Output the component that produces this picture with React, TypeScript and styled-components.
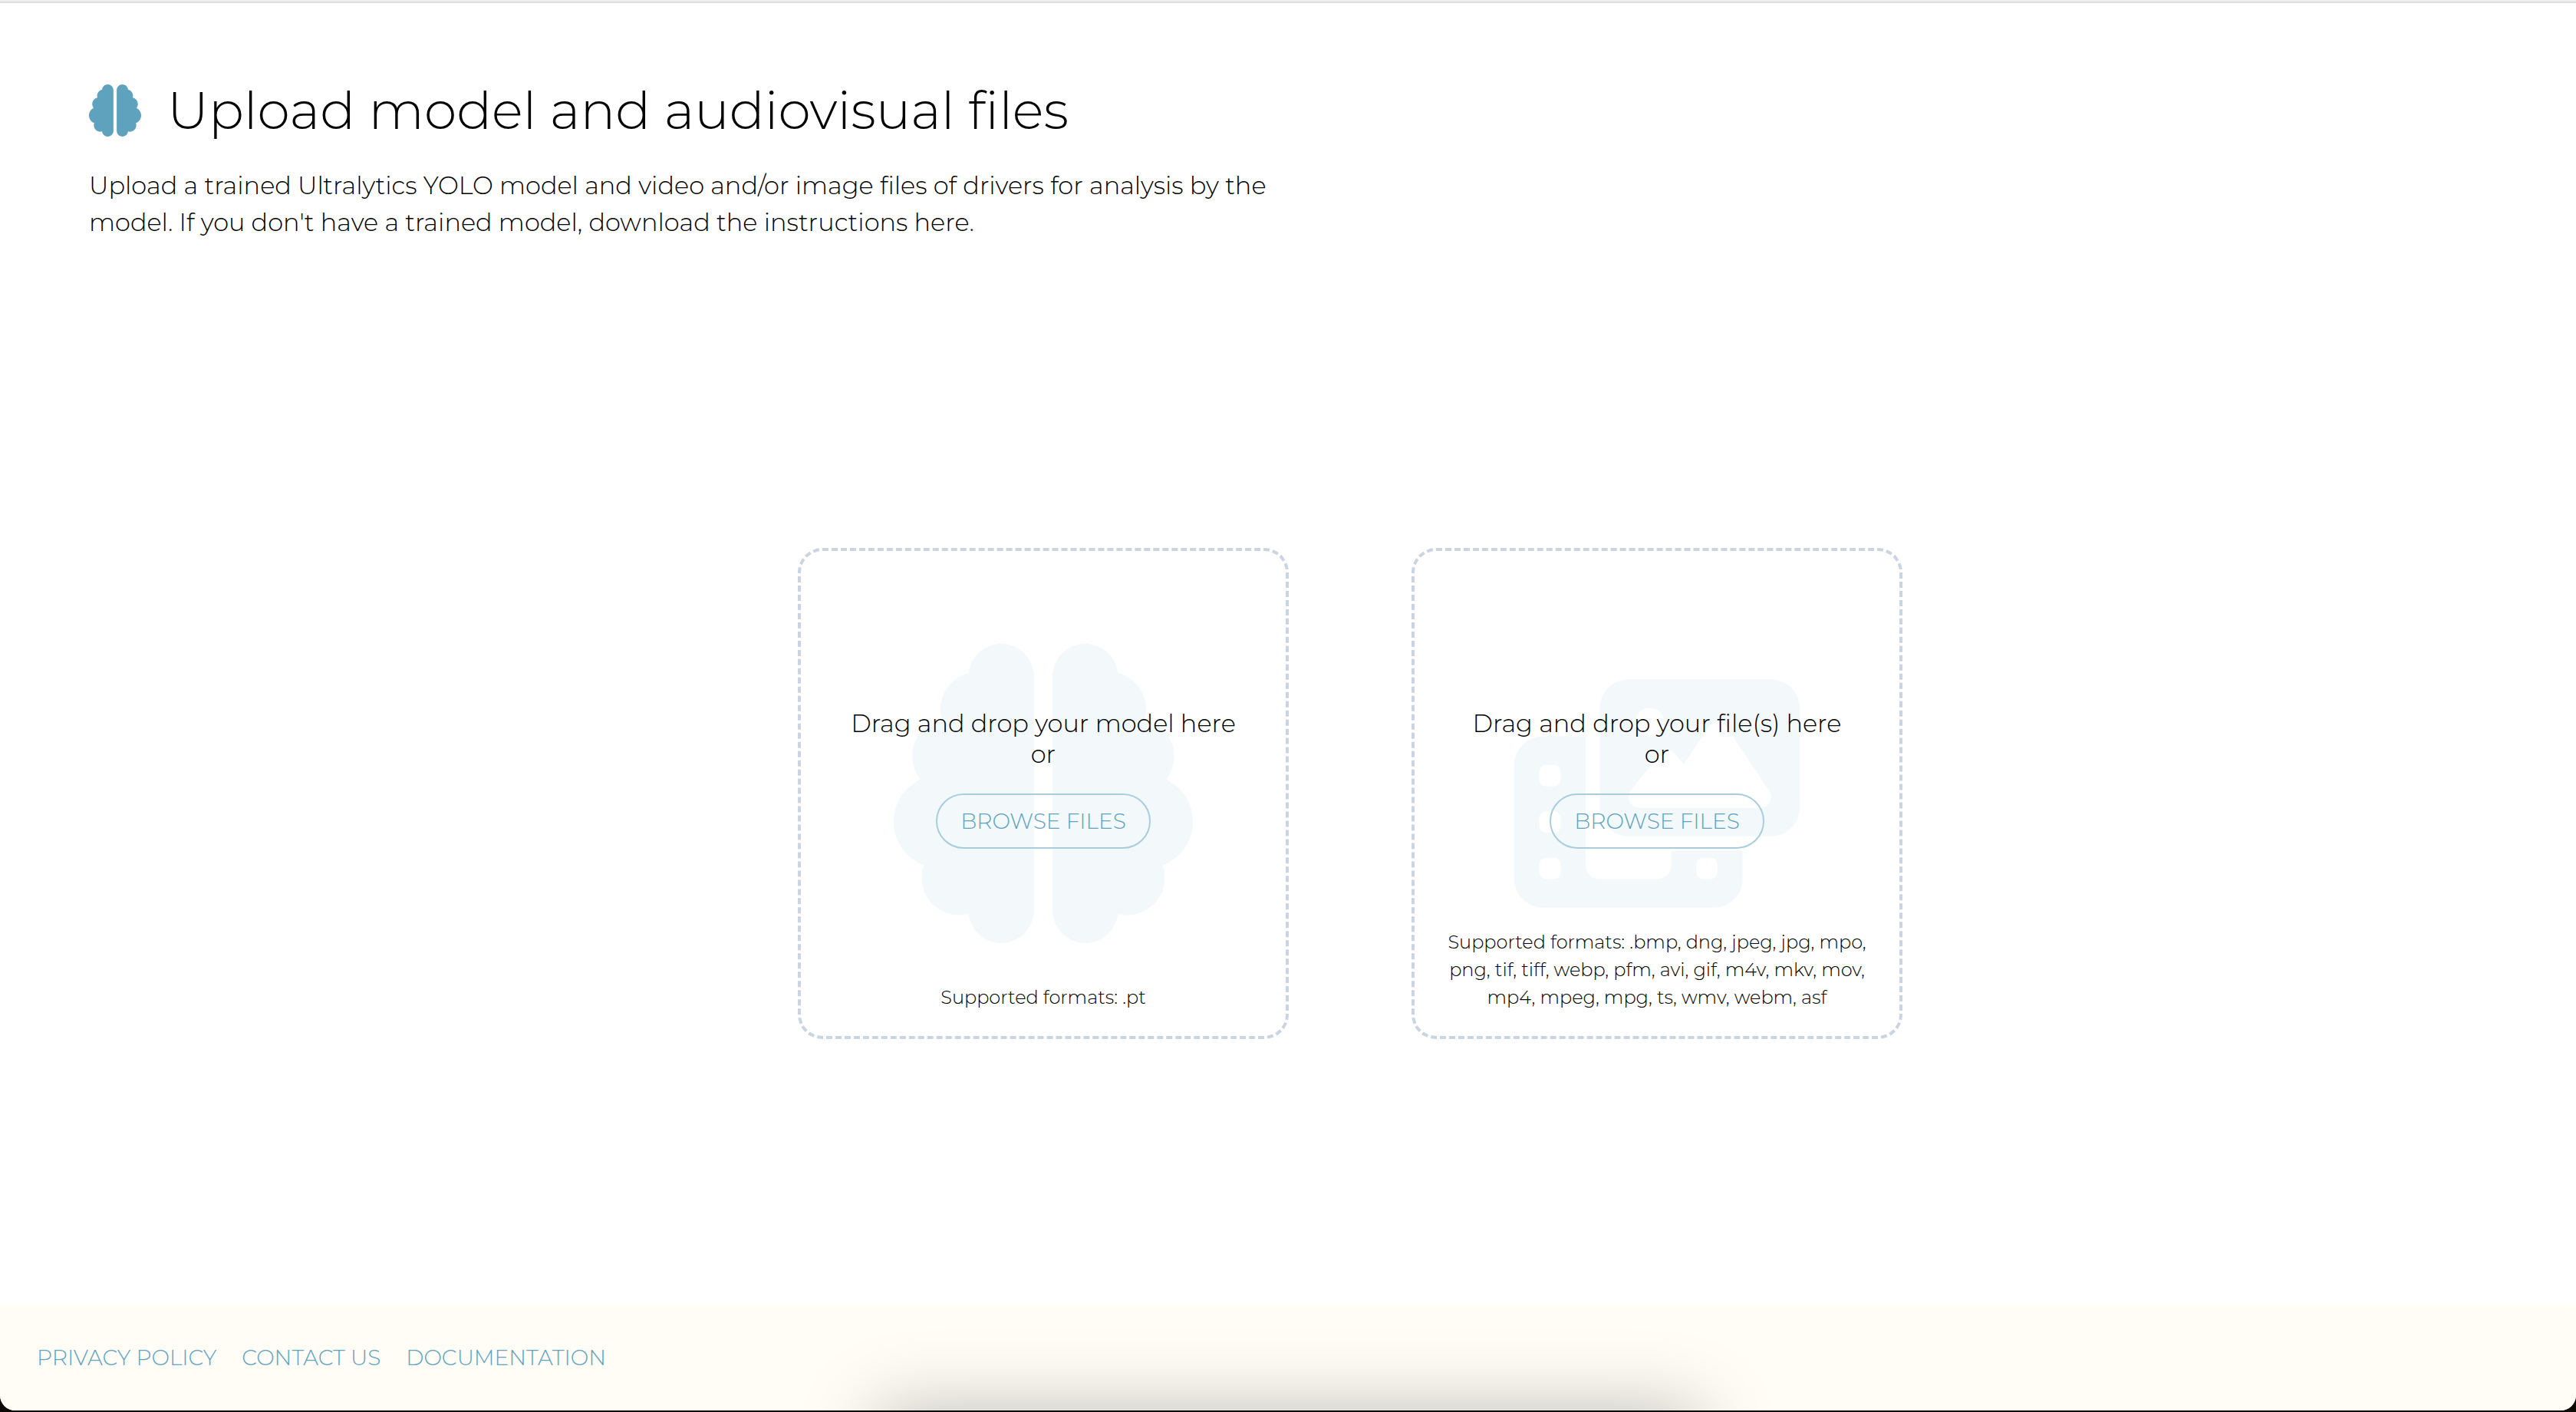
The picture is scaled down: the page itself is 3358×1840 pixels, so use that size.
import React, { useRef } from "react";
import styled, { createGlobalStyle } from "styled-components";
import { FaBrain, FaPhotoFilm } from "react-icons/fa6";

const GlobalStyle = createGlobalStyle`
  *, *::before, *::after { box-sizing: border-box; }
  body {
    margin: 0;
    background: #0b0a02;
    color: #000;
    font-family: Montserrat, "Open Sans", sans-serif;
    font-weight: 300;
  }
`;

const Screen = styled.div`
  display: flex;
  min-height: 100vh;
  padding-bottom: 2px;
`;

const Window = styled.div`
  flex: 1;
  display: flex;
  flex-direction: column;
  overflow: hidden;
  background: #fff;
  border-radius: 0 0 20px 20px;
`;

const TopEdge = styled.div`
  height: 4px;
  background: #efefef;
  border-bottom: 2px solid #dedede;
`;

const Main = styled.main`
  flex: 1;
  display: flex;
  flex-direction: column;
  padding: 98px 116px 0;
`;

const TitleRow = styled.div`
  display: flex;
  align-items: center;
  gap: 34px;
`;

const TitleIcon = styled(FaBrain)`
  width: 68px;
  height: 68px;
  color: #5fa2be;
`;

const Title = styled.h1`
  margin: 0;
  font-size: 68px;
  font-weight: 300;
  line-height: 84px;
`;

const Intro = styled.p`
  max-width: 1600px;
  margin: 32px 0 0;
  font-size: 32px;
  line-height: 48px;
`;

const DropZones = styled.section`
  flex: 1;
  display: flex;
  flex-wrap: wrap;
  align-items: center;
  justify-content: center;
  gap: 160px;
  padding: 53px 0 0 162px;
`;

const Zone = styled.div`
  display: grid;
  width: 640px;
  height: 640px;
  border: 4px dashed #cbd5e1;
  border-radius: 32px;

  > * { grid-area: 1 / 1; }
`;

const Watermark = styled.div<{ $width: number }>`
  place-self: center;
  display: flex;
  width: ${(p) => p.$width}px;
  color: #f3f8fa;

  svg {
    width: 100%;
    height: auto;
  }
`;

const ZoneBody = styled.div`
  position: relative;
  display: flex;
  flex-direction: column;
  align-items: center;
  padding: 205px 32px 32px;
  text-align: center;
`;

const Prompt = styled.p`
  margin: 0 0 31px;
  font-size: 32px;
  line-height: 40px;
`;

const BrowseButton = styled.button`
  padding: 17px 30px;
  border: 2px solid #a9cddc;
  border-radius: 36px;
  background: transparent;
  color: #5fa2be;
  font: inherit;
  font-size: 28px;
  line-height: 34px;
  text-transform: uppercase;
  cursor: pointer;
`;

const Formats = styled.p`
  max-width: 560px;
  margin: auto 0 0;
  font-size: 24px;
  line-height: 36px;
`;

const Footer = styled.footer`
  position: relative;
  display: flex;
  gap: 33px;
  padding: 52px 48px;
  background: #fffdf6;
`;

const DockShadow = styled.div`
  position: absolute;
  top: 100%;
  left: 34%;
  right: 34%;
  height: 160px;
  box-shadow: 0 0 100px rgba(0, 0, 0, 0.26);
`;

const FooterLink = styled.a`
  color: #5fa2be;
  font-size: 28px;
  line-height: 33px;
  text-decoration: none;
  text-transform: uppercase;
`;

type DropZoneProps = {
  prompt: string;
  formats: string;
  accept: string;
  multiple?: boolean;
  icon: React.ReactNode;
  iconWidth: number;
};

function DropZone({ prompt, formats, accept, multiple, icon, iconWidth }: DropZoneProps) {
  const input = useRef<HTMLInputElement>(null);
  return (
    <Zone>
      <Watermark $width={iconWidth} aria-hidden="true">{icon}</Watermark>
      <ZoneBody>
        <Prompt>
          {prompt}
          <br />
          or
        </Prompt>
        <BrowseButton type="button" onClick={() => input.current?.click()}>
          Browse files
        </BrowseButton>
        <input ref={input} type="file" accept={accept} multiple={multiple} aria-label={prompt} hidden />
        <Formats>Supported formats: {formats}</Formats>
      </ZoneBody>
    </Zone>
  );
}

export default function App() {
  return (
    <>
      <GlobalStyle />
      <Screen>
        <Window>
          <TopEdge />
          <Main>
            <TitleRow>
              <TitleIcon />
              <Title>Upload model and audiovisual files</Title>
            </TitleRow>
            <Intro>
              Upload a trained Ultralytics YOLO model and video and/or image files of drivers for analysis by the
              model. If you don't have a trained model, download the instructions here.
            </Intro>
            <DropZones>
              <DropZone
                prompt="Drag and drop your model here"
                formats=".pt"
                accept=".pt"
                icon={<FaBrain />}
                iconWidth={390}
              />
              <DropZone
                prompt="Drag and drop your file(s) here"
                formats=".bmp, dng, jpeg, jpg, mpo, png, tif, tiff, webp, pfm, avi, gif, m4v, mkv, mov, mp4, mpeg, mpg, ts, wmv, webm, asf"
                accept="image/*,video/*"
                multiple
                icon={<FaPhotoFilm />}
                iconWidth={372}
              />
            </DropZones>
          </Main>
          <Footer>
            <FooterLink href="#privacy">Privacy policy</FooterLink>
            <FooterLink href="#contact">Contact us</FooterLink>
            <FooterLink href="#docs">Documentation</FooterLink>
            <DockShadow />
          </Footer>
        </Window>
      </Screen>
    </>
  );
}
